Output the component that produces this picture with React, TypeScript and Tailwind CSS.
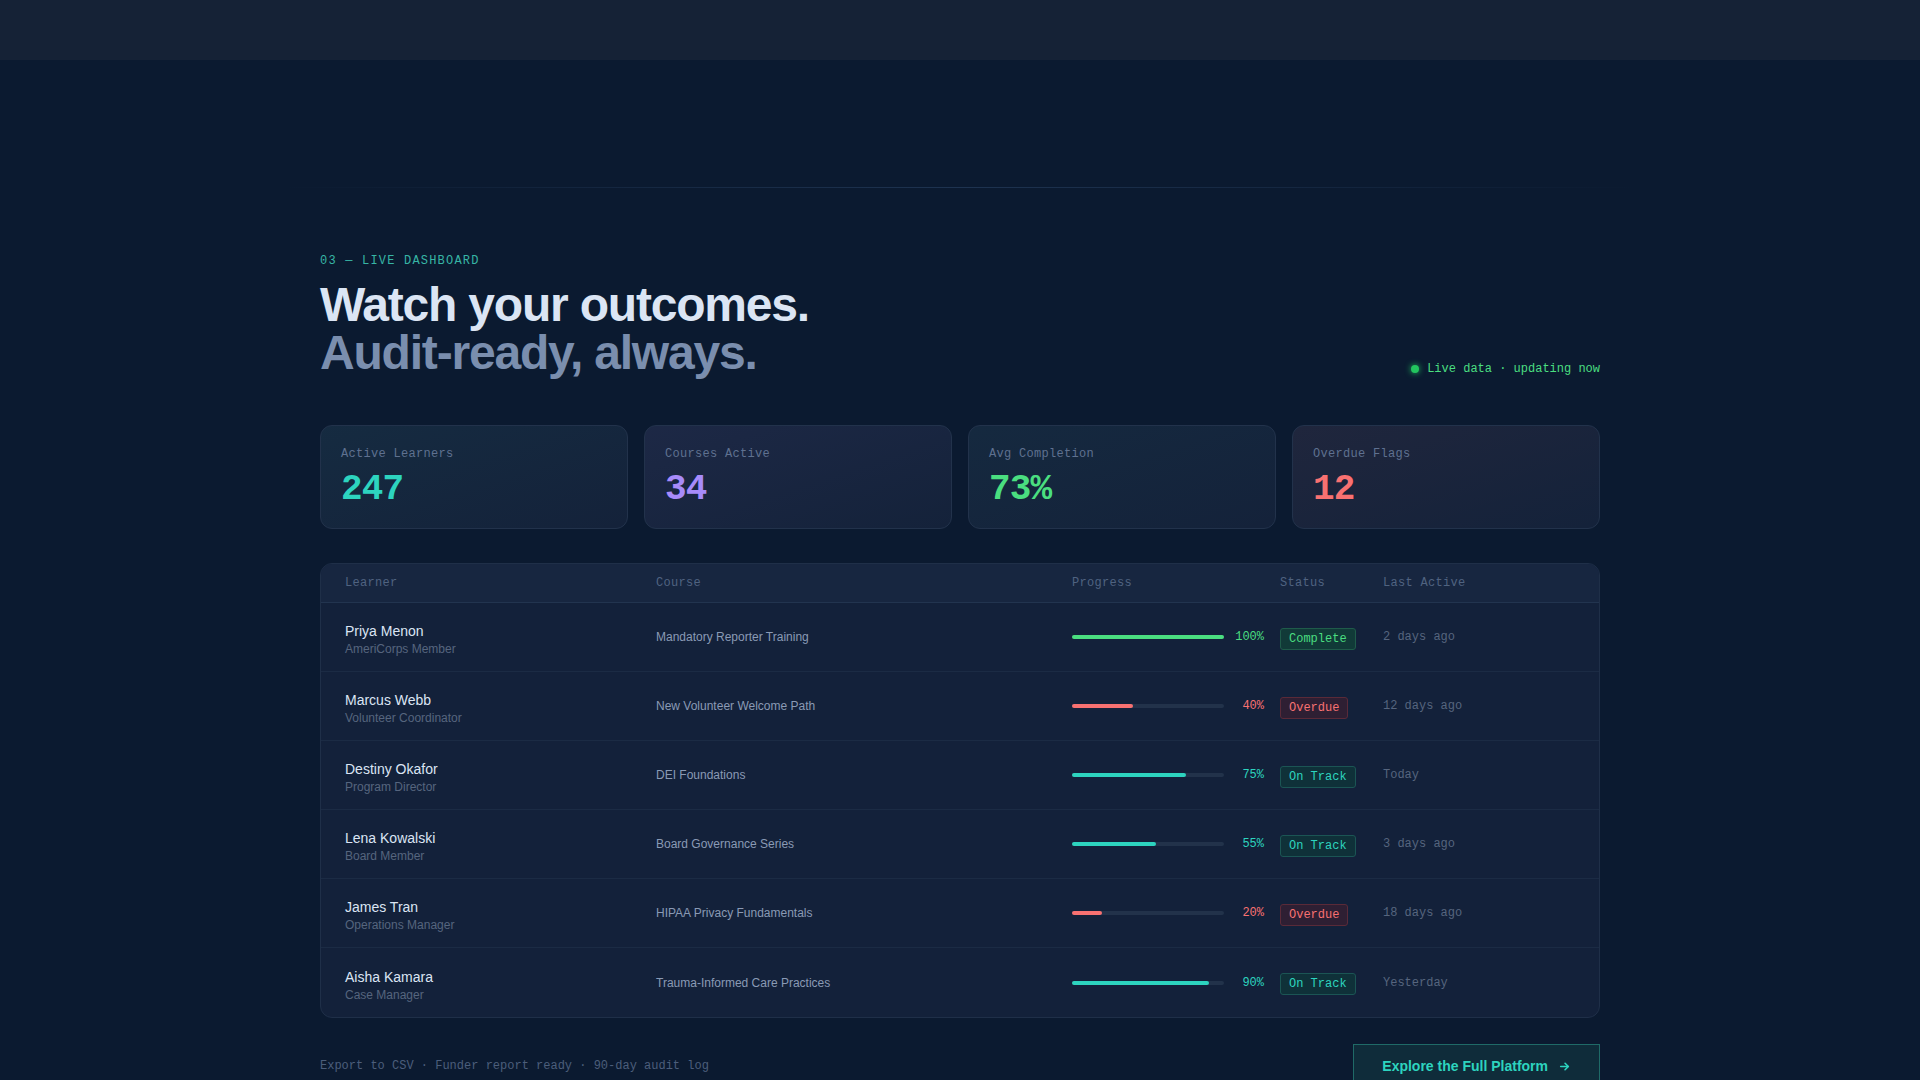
import React from "react";

const mono = "font-['Liberation_Mono',monospace]";
const sans = "font-['Liberation_Sans',Arial,sans-serif]";

type Status = "Complete" | "Overdue" | "On Track";

const rows: {
  name: string;
  role: string;
  course: string;
  progress: number;
  status: Status;
  last: string;
}[] = [
  { name: "Priya Menon", role: "AmeriCorps Member", course: "Mandatory Reporter Training", progress: 100, status: "Complete", last: "2 days ago" },
  { name: "Marcus Webb", role: "Volunteer Coordinator", course: "New Volunteer Welcome Path", progress: 40, status: "Overdue", last: "12 days ago" },
  { name: "Destiny Okafor", role: "Program Director", course: "DEI Foundations", progress: 75, status: "On Track", last: "Today" },
  { name: "Lena Kowalski", role: "Board Member", course: "Board Governance Series", progress: 55, status: "On Track", last: "3 days ago" },
  { name: "James Tran", role: "Operations Manager", course: "HIPAA Privacy Fundamentals", progress: 20, status: "Overdue", last: "18 days ago" },
  { name: "Aisha Kamara", role: "Case Manager", course: "Trauma-Informed Care Practices", progress: 90, status: "On Track", last: "Yesterday" },
];

const statusStyle: Record<Status, { bar: string; pct: string; badge: string }> = {
  Complete: {
    bar: "bg-[#4ade80]",
    pct: "text-[#4ade80]",
    badge: "bg-[#113a38] border-[#1f5b4a] text-[#4ade80]",
  },
  Overdue: {
    bar: "bg-[#f87171]",
    pct: "text-[#f87171]",
    badge: "bg-[#2e1f33] border-[#5a2a38] text-[#f87171]",
  },
  "On Track": {
    bar: "bg-[#2dd4bf]",
    pct: "text-[#2dd4bf]",
    badge: "bg-[#0f3139] border-[#1b5554] text-[#2dd4bf]",
  },
};

const stats = [
  { label: "Active Learners", value: "247", color: "text-[#2dd4bf]", tint: "from-[#2dd4bf]/[0.05]" },
  { label: "Courses Active", value: "34", color: "text-[#a78bfa]", tint: "from-[#a78bfa]/[0.06]" },
  { label: "Avg Completion", value: "73%", color: "text-[#4ade80]", tint: "from-[#2dd4bf]/[0.04]" },
  { label: "Overdue Flags", value: "12", color: "text-[#f87171]", tint: "from-[#f87171]/[0.05]" },
];

const cols = "grid grid-cols-[311px_416px_208px_103px_1fr] items-center px-6";

export default function App() {
  return (
    <div className={`min-h-screen bg-[#0b1a30] ${sans}`}>
      <div className="h-[60px] bg-[#152236]" />
      <div className="h-[127px]" />
      <div className="mx-auto h-px w-[1360px] bg-gradient-to-r from-transparent via-[#1e3350] to-transparent" />

      <section className="mx-auto max-w-[1280px] pt-[65px]">
        <div className="mb-12 flex items-end justify-between">
          <div>
            <div className={`${mono} mb-3 text-xs leading-4 tracking-widest text-[#37b5a5]`}>
              03 — LIVE DASHBOARD
            </div>
            <h2 className="text-5xl leading-none font-bold tracking-tight text-[#dbe5f4]">
              Watch your outcomes.
              <br />
              <span className="text-[#7a8eae]">Audit-ready, always.</span>
            </h2>
          </div>
          <div className={`${mono} flex items-center gap-2 text-xs leading-4 text-[#4ade80]`}>
            <span className="h-2 w-2 rounded-full bg-[#22c55e] shadow-[0_0_6px_#22c55e]" />
            Live data · updating now
          </div>
        </div>

        <div className="mb-[34px] grid grid-cols-4 gap-4">
          {stats.map((s) => (
            <div
              key={s.label}
              className={`h-[104px] rounded-xl border border-[#22324b] bg-[#14223a] bg-gradient-to-br ${s.tint} to-transparent px-5 pt-5`}
            >
              <div className={`${mono} text-xs leading-4 tracking-wide text-[#5f7190]`}>{s.label}</div>
              <div className={`${mono} mt-2 text-4xl leading-10 font-bold tracking-tight ${s.color}`}>{s.value}</div>
            </div>
          ))}
        </div>

        <div className="overflow-hidden rounded-xl border border-[#1f2f48] bg-[#13213a]">
          <div className={`${cols} h-[39px] border-b border-[#22344f] bg-[#172640] ${mono} text-xs tracking-wide text-[#506380]`}>
            <div>Learner</div>
            <div>Course</div>
            <div>Progress</div>
            <div>Status</div>
            <div>Last Active</div>
          </div>
          {rows.map((r, i) => {
            const st = statusStyle[r.status];
            return (
              <div
                key={r.name}
                className={`${cols} h-[69px] ${i < rows.length - 1 ? "border-b border-[#1b2b44]" : ""}`}
              >
                <div className="pt-1">
                  <div className="text-sm leading-5 text-[#dbe5f4]">{r.name}</div>
                  <div className="text-xs leading-4 text-[#56657e]">{r.role}</div>
                </div>
                <div className="text-xs text-[#8a9ab5]">{r.course}</div>
                <div className="flex items-center gap-2.5 pr-4">
                  <div className="h-1 flex-1 rounded-full bg-[#22324a]">
                    <div className={`h-1 rounded-full ${st.bar}`} style={{ width: `${r.progress}%` }} />
                  </div>
                  <div className={`${mono} w-[30px] text-right text-xs ${st.pct}`}>{r.progress}%</div>
                </div>
                <div>
                  <span className={`${mono} inline-block rounded-[3px] border px-2 py-0.5 text-xs leading-4 ${st.badge}`}>
                    {r.status}
                  </span>
                </div>
                <div className={`${mono} text-xs text-[#56657e]`}>{r.last}</div>
              </div>
            );
          })}
        </div>

        <div className="mt-[26px] flex items-center justify-between">
          <div className={`${mono} text-xs text-[#4c5e7b]`}>
            Export to CSV · Funder report ready · 90-day audit log
          </div>
          <button className="flex h-11 items-center gap-2.5 border border-[#1f6a67] bg-[#0f2c3a] px-7 text-sm font-bold text-[#2dd4bf]">
            Explore the Full Platform
            <svg width="13" height="13" viewBox="0 0 24 24" fill="none" stroke="currentColor" strokeWidth="3" strokeLinecap="round" strokeLinejoin="round">
              <path d="M5 12h14" />
              <path d="M13 6l6 6-6 6" />
            </svg>
          </button>
        </div>
      </section>
    </div>
  );
}
